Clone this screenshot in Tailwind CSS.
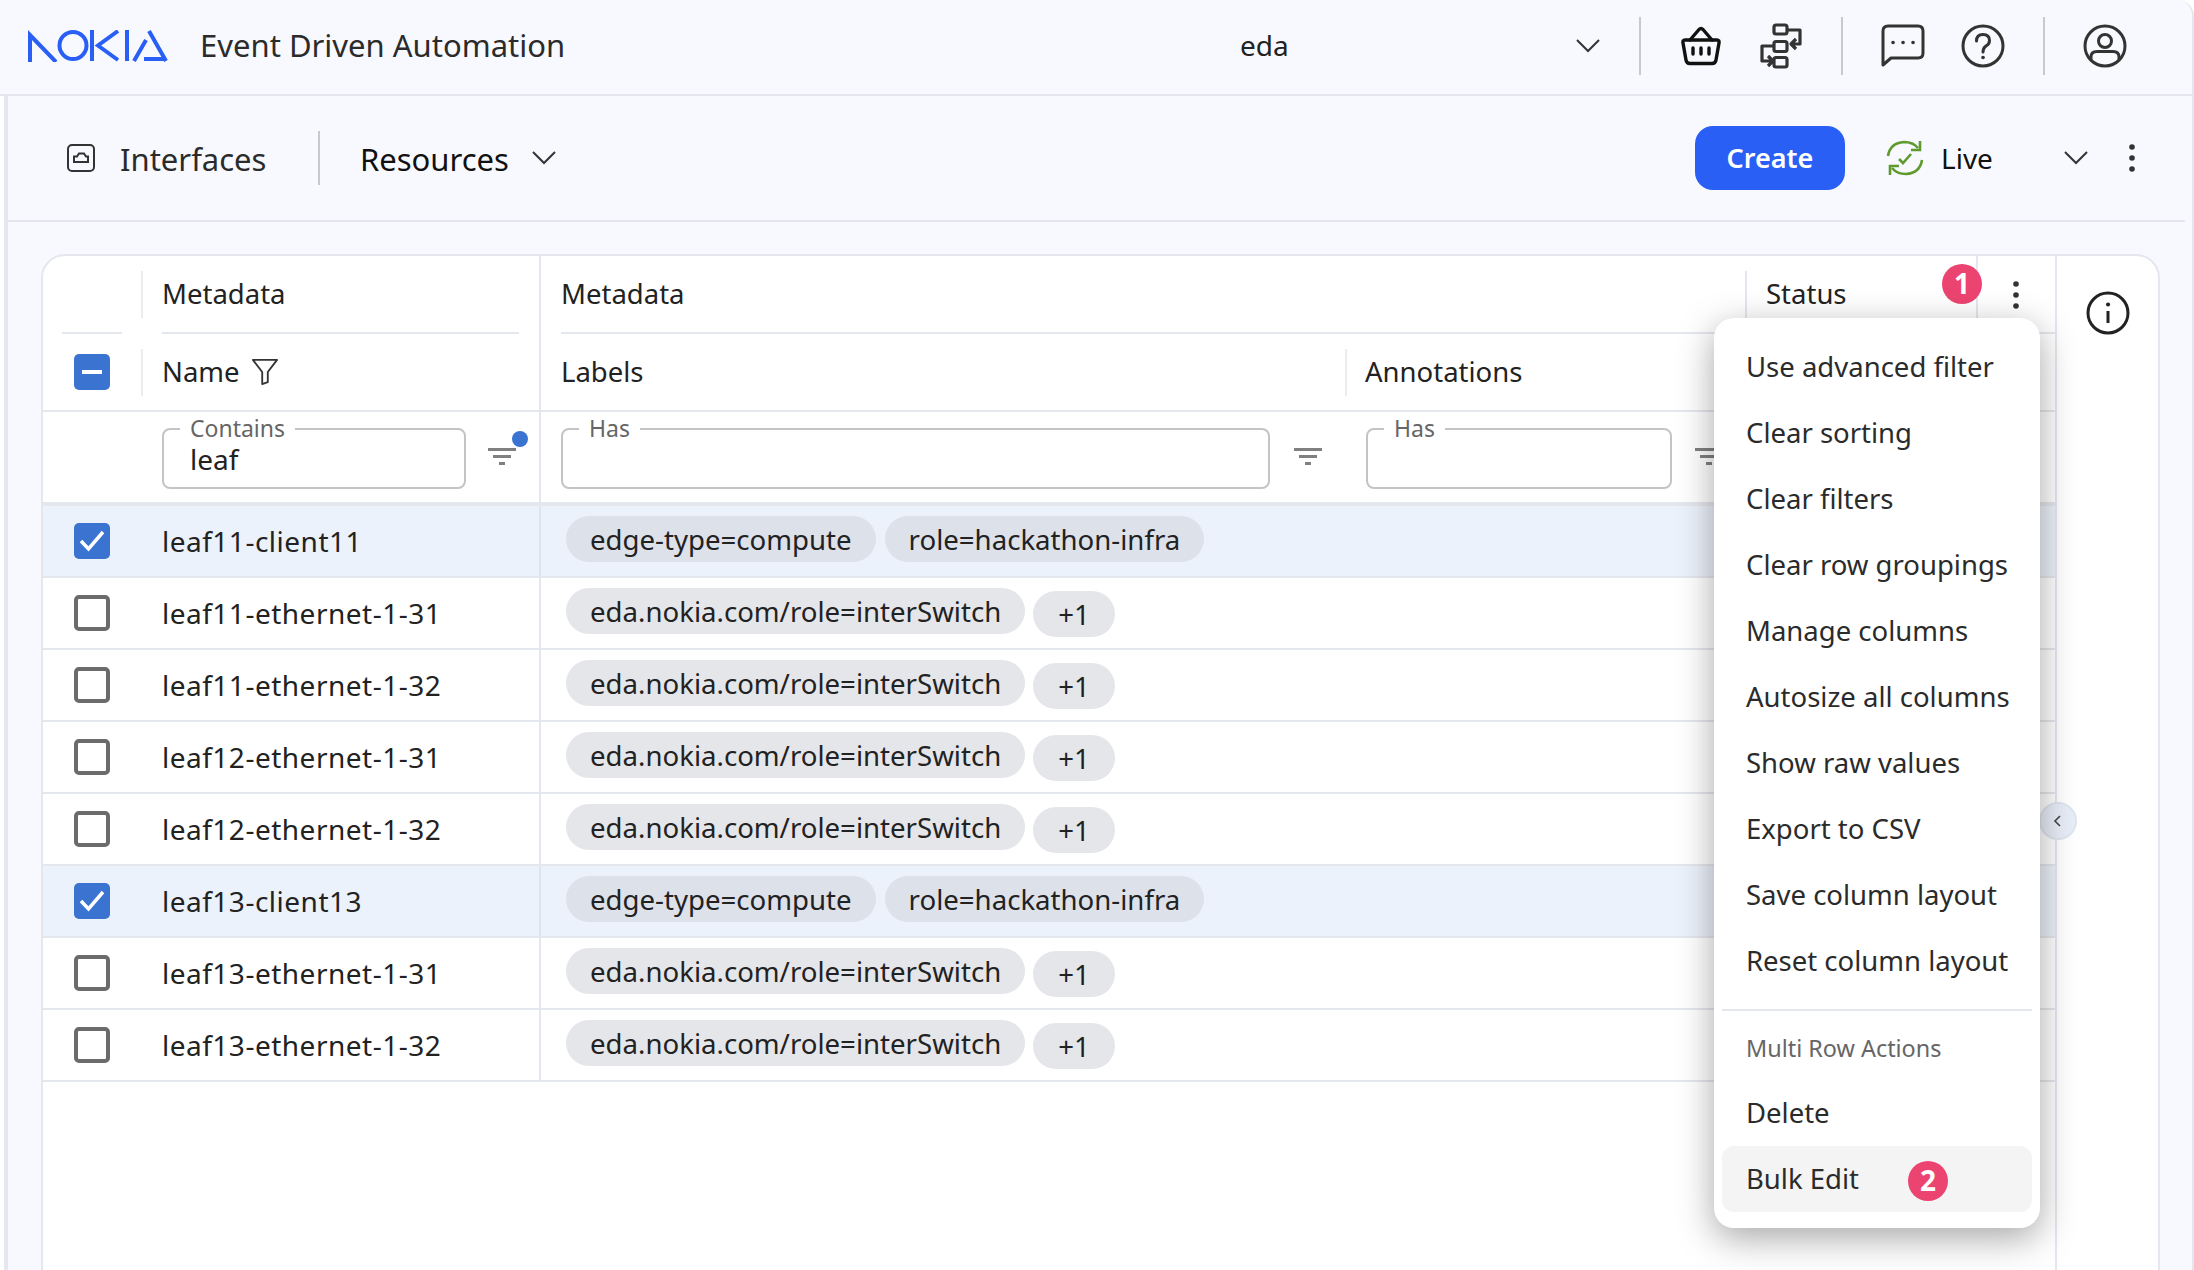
<!DOCTYPE html>
<html lang="en">
<head>
<meta charset="UTF-8" />
<title>Event Driven Automation</title>
<script src="https://cdn.jsdelivr.net/npm/@tailwindcss/browser@4"></script>
</head>
<body class="relative w-[2194px] h-[1270px] overflow-hidden bg-white text-[#222] font-['Noto_Sans',sans-serif] text-[27.5px]">

<!-- Top bar -->
<header class="flex items-center h-[96px] pb-[2px] bg-[#f8f9fe] border-b-2 border-r-2 border-[#e5e7ee] rounded-tr-[16px]">
  <svg class="ml-[28px]" width="140" height="32" viewBox="0 0 140 32" fill="none" stroke="#2a5ff5" stroke-width="4">
    <path d="M2 32V5L28 32" />
    <circle cx="45" cy="15.5" r="13.5" />
    <path d="M64 0V31M90 1L70 15.5L90 30M99 0V31" />
    <path d="M121 1L138 31M106 31L118 10M116 29H138" />
  </svg>
  <span class="ml-[32px] w-[700px] text-[31px] text-[#2b2b2b] pb-[2px]">Event Driven Automation</span>
  <span class="ml-[340px] w-[336px] text-[28px] pb-[2px]">eda</span>
  <svg width="24" height="14" viewBox="0 0 24 14" fill="none" stroke="#333" stroke-width="2"><path d="M1 1L12 12L23 1" /></svg>
  <div class="ml-[39px] w-[2px] h-[58px] bg-[#c8c9cc]"></div>
  <svg class="ml-[40px]" width="40" height="40" viewBox="0 0 40 40" fill="none" stroke="#111" stroke-width="3.4" stroke-linecap="round" stroke-linejoin="round">
    <path d="M9 14L18 3.5Q20 1.5 22 3.5L31 14" />
    <path d="M4 14H36Q38.500 14 38 17L35 34Q34.500 37.500 31 37.500H9Q5.500 37.500 5 34L2 17Q1.500 14 4 14Z" />
    <path d="M12 22V28M20 22V28M28 22V28" />
  </svg>
  <svg class="ml-[39px]" width="44" height="46" viewBox="0 0 44 46" fill="none" stroke="#333" stroke-width="3.2" stroke-linejoin="round">
    <rect x="14" y="2" width="13" height="9" rx="2" />
    <rect x="14" y="18.500" width="13" height="10" rx="2" />
    <rect x="14" y="34.500" width="13" height="9.500" rx="2" />
    <path d="M27 7H40V21H31M36 16L31 21L36 26" />
    <path d="M14 23H2V38H13M8 33L13 38L8 43" />
  </svg>
  <div class="ml-[37px] w-[2px] h-[58px] bg-[#c8c9cc]"></div>
  <svg class="ml-[38px]" width="44" height="44" viewBox="0 0 44 44" fill="none" stroke="#333" stroke-width="3">
    <path d="M2 41V7Q2 2 7 2H37Q42 2 42 7V29Q42 34 37 34H10Z" stroke-linejoin="round" />
    <path d="M12 18.500h.1M22 18.500h.1M32 18.500h.1" stroke-width="3.600" stroke-linecap="round" />
  </svg>
  <svg class="ml-[36px]" width="44" height="44" viewBox="0 0 44 44" fill="none" stroke="#333" stroke-width="3">
    <circle cx="22" cy="22" r="20" />
    <path d="M15.500 17Q15.500 10.500 22 10.500Q28.500 10.500 28.500 16.500Q28.500 20 25 22Q22 24 22 28" stroke-linecap="round" />
    <path d="M22 33.500h.1" stroke-width="3.600" stroke-linecap="round" />
  </svg>
  <div class="ml-[38px] w-[2px] h-[58px] bg-[#c8c9cc]"></div>
  <svg class="ml-[38px]" width="44" height="44" viewBox="0 0 44 44" fill="none" stroke="#333" stroke-width="3">
    <circle cx="22" cy="22" r="20" />
    <circle cx="22" cy="17" r="6.500" />
    <path d="M8 36V33Q8 27.500 14 27.500H30Q36 27.500 36 33V36" />
  </svg>
</header>

<!-- Page body -->
<main class="ml-[4px] border-l-4 border-r-2 border-[#e5e7ee] h-[1174px] bg-[#f8f9fe]">
  <!-- Toolbar -->
  <div class="flex items-center h-[126px] mr-[7px] border-b-2 border-[#e5e7ee]">
    <svg class="ml-[59px]" width="28" height="28" viewBox="0 0 28 28" fill="none" stroke="#333" stroke-width="2">
      <rect x="1" y="1" width="26" height="26" rx="4" />
      <path d="M7 18V12.500H10L12 9.500H17L19 12.500H21V18Z" />
    </svg>
    <span class="ml-[25px] w-[198px] text-[#2b2b2b] text-[31px] pt-[3px]">Interfaces</span>
    <div class="w-[2px] h-[54px] bg-[#c8c9cc]"></div>
    <span class="ml-[40px] w-[149px] text-[#111] text-[31px] pt-[3px]">Resources</span>
    <svg class="ml-[23px]" width="24" height="14" viewBox="0 0 24 14" fill="none" stroke="#333" stroke-width="2"><path d="M1 1L12 12L23 1" /></svg>
    <button class="ml-[1139px] w-[150px] h-[64px] rounded-[18px] bg-[#2a5ff5] text-white font-semibold text-[27px]">Create</button>
    <svg class="ml-[41px]" width="38" height="38" viewBox="0 0 38 38" fill="none" stroke="#5f9a2f" stroke-width="2.600">
      <path d="M2 17Q4 4 18 3Q27 3 32 9" />
      <path d="M34 2V11H25" />
      <path d="M36 21Q34 34 20 35Q11 35 6 29" />
      <path d="M4 36V27H13" />
      <path d="M13 20L17 24L25 15" />
    </svg>
    <span class="ml-[17px] w-[123px] text-[#111] text-[28px]">Live</span>
    <svg width="24" height="14" viewBox="0 0 24 14" fill="none" stroke="#333" stroke-width="2"><path d="M1 1L12 12L23 1" /></svg>
    <svg class="ml-[40px]" width="8" height="28" viewBox="0 0 8 28" fill="#333"><circle cx="4" cy="3" r="2.800" /><circle cx="4" cy="14" r="2.800" /><circle cx="4" cy="25" r="2.800" /></svg>
  </div>

  <!-- Card -->
  <section class="ml-[33px] mt-[32px] w-[2119px] h-[1060px] flex bg-white border-2 border-[#e5e7ee] rounded-[24px] overflow-hidden">
    <div class="w-[2014px] border-r-2 border-[#e5e7ee] flex flex-col">

      <!-- Column headers -->
      <div class="flex h-[78px]">
        <div class="w-[98px] flex-none pl-[19px] flex flex-col justify-end">
          <div class="w-[60px] h-[2px] bg-[#e5e7ee]"></div>
        </div>
        <div class="w-[400px] flex-none flex border-r-2 border-[#e5e7ee]">
          <div class="w-[2px] h-[47px] mt-[15px] bg-[#ececf0]"></div>
          <div class="ml-[19px] mr-[20px] flex-1 border-b-2 border-[#e5e7ee] pt-[17px]">Metadata</div>
        </div>
        <div class="ml-[20px] w-[1164px] flex-none border-b-2 border-[#e5e7ee] pt-[17px]">Metadata</div>
        <div class="ml-[20px] w-[231px] flex-none flex">
          <div class="w-[2px] h-[47px] mt-[15px] bg-[#e5e7ee]"></div>
          <div class="ml-[19px] flex-1 pt-[17px] border-b-2 border-[#e5e7ee]">Status</div>
        </div>
        <div class="flex-1 border-l-2 border-[#e5e7ee] flex flex-col justify-end">
          <div class="h-[2px] bg-[#e5e7ee]"></div>
        </div>
      </div>
      <div class="flex h-[78px] border-b-2 border-[#e5e7ee]">
        <div class="w-[98px] flex-none flex items-center pl-[31px]">
          <div class="w-[36px] h-[36px] rounded-[5px] bg-[#3a73d0] flex items-center justify-center"><div class="w-[20px] h-[4px] bg-white"></div></div>
        </div>
        <div class="w-[400px] flex-none flex items-center border-r-2 border-[#e5e7ee]">
          <div class="w-[2px] h-[47px] bg-[#ececf0]"></div>
          <span class="ml-[19px] w-[72px]">Name</span>
          <svg class="ml-[18px]" width="26" height="28" viewBox="0 0 28 30" fill="none" stroke="#333" stroke-width="2"><path d="M1 2H27L17 15V26L11 28V15Z" stroke-linejoin="round" /></svg>
        </div>
        <span class="ml-[20px] w-[784px] self-center">Labels</span>
        <div class="w-[2px] h-[47px] self-center bg-[#ececf0]"></div>
        <span class="ml-[18px] self-center">Annotations</span>
      </div>

      <!-- Filters -->
      <div class="flex h-[94px] border-b-4 border-[#e5e7ee]">
        <div class="w-[119px] flex-none"></div>
        <div class="w-[379px] flex-none border-r-2 border-[#e5e7ee] flex items-start pt-[16px]">
          <div class="relative w-[304px] h-[61px] border-2 border-[#c4c4c4] rounded-[8px]">
            <span class="absolute left-[16px] top-[-18px] px-[10px] bg-white text-[23px] leading-[32px] text-[#666]">Contains</span>
            <span class="absolute left-[26px] top-[10px] leading-[38px] text-[28px]">leaf</span>
          </div>
          <div class="relative ml-[22px] mt-[20px] w-[28px] flex flex-col items-center gap-[4px]">
            <div class="w-[28px] h-[3px] bg-[#808080]"></div><div class="w-[18px] h-[3px] bg-[#808080]"></div><div class="w-[6px] h-[3px] bg-[#808080]"></div>
            <div class="absolute left-[24px] top-[-17px] w-[16px] h-[16px] rounded-full bg-[#3a73d0]"></div>
          </div>
        </div>
        <div class="ml-[20px] w-[709px] flex-none pt-[16px]">
          <div class="relative h-[61px] border-2 border-[#c4c4c4] rounded-[8px]">
            <span class="absolute left-[16px] top-[-18px] px-[10px] bg-white text-[23px] leading-[32px] text-[#666]">Has</span>
          </div>
        </div>
        <div class="ml-[24px] mt-[36px] w-[28px] flex-none flex flex-col items-center gap-[4px]">
          <div class="w-[28px] h-[3px] bg-[#808080]"></div><div class="w-[18px] h-[3px] bg-[#808080]"></div><div class="w-[6px] h-[3px] bg-[#808080]"></div>
        </div>
        <div class="ml-[44px] w-[306px] flex-none pt-[16px]">
          <div class="relative h-[61px] border-2 border-[#c4c4c4] rounded-[8px]">
            <span class="absolute left-[16px] top-[-18px] px-[10px] bg-white text-[23px] leading-[32px] text-[#666]">Has</span>
          </div>
        </div>
        <div class="ml-[23px] mt-[36px] w-[28px] flex-none flex flex-col items-center gap-[4px]">
          <div class="w-[28px] h-[3px] bg-[#808080]"></div><div class="w-[18px] h-[3px] bg-[#808080]"></div><div class="w-[6px] h-[3px] bg-[#808080]"></div>
        </div>
      </div>

      <!-- Rows -->
      <div class="flex h-[72px] border-b-2 border-[#e5e7ee] bg-[#ecf2fb]">
        <div class="w-[498px] flex-none flex items-center pl-[31px] border-r-2 border-[#dfe5f0]">
          <div class="w-[36px] h-[36px] rounded-[5px] bg-[#3a73d0] flex items-center justify-center"><svg width="28" height="24" viewBox="0 0 28 24" fill="none" stroke="#fff" stroke-width="3.500"><path d="M3 12L10.500 20L25 3" /></svg></div>
          <span class="ml-[52px] text-[28px] tracking-[0.5px]">leaf11-client11</span>
        </div>
        <div class="flex items-start gap-[9px] pl-[25px] pt-[10px]">
          <span class="h-[46px] px-[24px] rounded-full bg-[#dde1e9] leading-[46px] text-[27.6px]">edge-type=compute</span>
          <span class="h-[46px] px-[24px] rounded-full bg-[#dde1e9] leading-[46px] text-[27.6px]">role=hackathon-infra</span>
        </div>
      </div>
      <div class="flex h-[72px] border-b-2 border-[#e5e7ee]">
        <div class="w-[498px] flex-none flex items-center pl-[31px] border-r-2 border-[#e5e7ee]">
          <div class="w-[36px] h-[36px] rounded-[5px] border-4 border-[#6b6b6b]"></div>
          <span class="ml-[52px] text-[28px] tracking-[0.5px]">leaf11-ethernet-1-31</span>
        </div>
        <div class="flex items-start gap-[8px] pl-[25px] pt-[10px]">
          <span class="h-[46px] px-[24px] rounded-full bg-[#e5e6ea] leading-[46px] text-[27.6px]">eda.nokia.com/role=interSwitch</span>
          <span class="h-[46px] mt-[3px] px-[25px] rounded-full bg-[#e5e6ea] leading-[47px] text-[27.6px]">+1</span>
        </div>
      </div>
      <div class="flex h-[72px] border-b-2 border-[#e5e7ee]">
        <div class="w-[498px] flex-none flex items-center pl-[31px] border-r-2 border-[#e5e7ee]">
          <div class="w-[36px] h-[36px] rounded-[5px] border-4 border-[#6b6b6b]"></div>
          <span class="ml-[52px] text-[28px] tracking-[0.5px]">leaf11-ethernet-1-32</span>
        </div>
        <div class="flex items-start gap-[8px] pl-[25px] pt-[10px]">
          <span class="h-[46px] px-[24px] rounded-full bg-[#e5e6ea] leading-[46px] text-[27.6px]">eda.nokia.com/role=interSwitch</span>
          <span class="h-[46px] mt-[3px] px-[25px] rounded-full bg-[#e5e6ea] leading-[47px] text-[27.6px]">+1</span>
        </div>
      </div>
      <div class="flex h-[72px] border-b-2 border-[#e5e7ee]">
        <div class="w-[498px] flex-none flex items-center pl-[31px] border-r-2 border-[#e5e7ee]">
          <div class="w-[36px] h-[36px] rounded-[5px] border-4 border-[#6b6b6b]"></div>
          <span class="ml-[52px] text-[28px] tracking-[0.5px]">leaf12-ethernet-1-31</span>
        </div>
        <div class="flex items-start gap-[8px] pl-[25px] pt-[10px]">
          <span class="h-[46px] px-[24px] rounded-full bg-[#e5e6ea] leading-[46px] text-[27.6px]">eda.nokia.com/role=interSwitch</span>
          <span class="h-[46px] mt-[3px] px-[25px] rounded-full bg-[#e5e6ea] leading-[47px] text-[27.6px]">+1</span>
        </div>
      </div>
      <div class="flex h-[72px] border-b-2 border-[#e5e7ee]">
        <div class="w-[498px] flex-none flex items-center pl-[31px] border-r-2 border-[#e5e7ee]">
          <div class="w-[36px] h-[36px] rounded-[5px] border-4 border-[#6b6b6b]"></div>
          <span class="ml-[52px] text-[28px] tracking-[0.5px]">leaf12-ethernet-1-32</span>
        </div>
        <div class="flex items-start gap-[8px] pl-[25px] pt-[10px]">
          <span class="h-[46px] px-[24px] rounded-full bg-[#e5e6ea] leading-[46px] text-[27.6px]">eda.nokia.com/role=interSwitch</span>
          <span class="h-[46px] mt-[3px] px-[25px] rounded-full bg-[#e5e6ea] leading-[47px] text-[27.6px]">+1</span>
        </div>
      </div>
      <div class="flex h-[72px] border-b-2 border-[#e5e7ee] bg-[#ecf2fb]">
        <div class="w-[498px] flex-none flex items-center pl-[31px] border-r-2 border-[#dfe5f0]">
          <div class="w-[36px] h-[36px] rounded-[5px] bg-[#3a73d0] flex items-center justify-center"><svg width="28" height="24" viewBox="0 0 28 24" fill="none" stroke="#fff" stroke-width="3.500"><path d="M3 12L10.500 20L25 3" /></svg></div>
          <span class="ml-[52px] text-[28px] tracking-[0.5px]">leaf13-client13</span>
        </div>
        <div class="flex items-start gap-[9px] pl-[25px] pt-[10px]">
          <span class="h-[46px] px-[24px] rounded-full bg-[#dde1e9] leading-[46px] text-[27.6px]">edge-type=compute</span>
          <span class="h-[46px] px-[24px] rounded-full bg-[#dde1e9] leading-[46px] text-[27.6px]">role=hackathon-infra</span>
        </div>
      </div>
      <div class="flex h-[72px] border-b-2 border-[#e5e7ee]">
        <div class="w-[498px] flex-none flex items-center pl-[31px] border-r-2 border-[#e5e7ee]">
          <div class="w-[36px] h-[36px] rounded-[5px] border-4 border-[#6b6b6b]"></div>
          <span class="ml-[52px] text-[28px] tracking-[0.5px]">leaf13-ethernet-1-31</span>
        </div>
        <div class="flex items-start gap-[8px] pl-[25px] pt-[10px]">
          <span class="h-[46px] px-[24px] rounded-full bg-[#e5e6ea] leading-[46px] text-[27.6px]">eda.nokia.com/role=interSwitch</span>
          <span class="h-[46px] mt-[3px] px-[25px] rounded-full bg-[#e5e6ea] leading-[47px] text-[27.6px]">+1</span>
        </div>
      </div>
      <div class="flex h-[72px] border-b-2 border-[#e5e7ee]">
        <div class="w-[498px] flex-none flex items-center pl-[31px] border-r-2 border-[#e5e7ee]">
          <div class="w-[36px] h-[36px] rounded-[5px] border-4 border-[#6b6b6b]"></div>
          <span class="ml-[52px] text-[28px] tracking-[0.5px]">leaf13-ethernet-1-32</span>
        </div>
        <div class="flex items-start gap-[8px] pl-[25px] pt-[10px]">
          <span class="h-[46px] px-[24px] rounded-full bg-[#e5e6ea] leading-[46px] text-[27.6px]">eda.nokia.com/role=interSwitch</span>
          <span class="h-[46px] mt-[3px] px-[25px] rounded-full bg-[#e5e6ea] leading-[47px] text-[27.6px]">+1</span>
        </div>
      </div>
    </div>

    <!-- Info panel -->
    <div class="flex-1 flex justify-center pt-[35px]">
      <svg width="44" height="44" viewBox="0 0 44 44" fill="none" stroke="#222" stroke-width="3">
        <circle cx="22" cy="22" r="20" />
        <path d="M22 13.500h.1" stroke-width="4" stroke-linecap="round" />
        <path d="M22 20V32" />
      </svg>
    </div>
  </section>
</main>

<!-- Column menu kebab and step badges -->
<svg class="absolute left-[2012px] top-[281px]" width="8" height="28" viewBox="0 0 8 28" fill="#333"><circle cx="4" cy="3" r="2.800" /><circle cx="4" cy="14" r="2.800" /><circle cx="4" cy="25" r="2.800" /></svg>
<div class="absolute left-[1942px] top-[264px] w-[40px] h-[40px] rounded-full bg-[#ec4470] text-white font-bold text-[28px] leading-[38px] text-center font-['Open_Sans',sans-serif]">1</div>

<!-- Collapse handle -->
<div class="absolute left-[2039px] top-[802px] w-[38px] h-[38px] rounded-full bg-[#e8eef8] border-2 border-[#dfe5f0] flex items-center justify-center">
  <svg width="10" height="14" viewBox="0 0 10 14" fill="none" stroke="#444" stroke-width="1.600"><path d="M7 2L2 7L7 12" /></svg>
</div>

<!-- Column menu -->
<div class="absolute left-[1714px] top-[318px] w-[326px] pt-[16px] pb-[16px] px-[8px] bg-white rounded-[20px] shadow-[0_10px_36px_rgba(0,0,0,0.35)] text-[#2b2b2b] whitespace-nowrap">
  <div class="h-[66px] flex items-center px-[24px]">Use advanced filter</div>
  <div class="h-[66px] flex items-center px-[24px]">Clear sorting</div>
  <div class="h-[66px] flex items-center px-[24px]">Clear filters</div>
  <div class="h-[66px] flex items-center px-[24px]">Clear row groupings</div>
  <div class="h-[66px] flex items-center px-[24px]">Manage columns</div>
  <div class="h-[66px] flex items-center px-[24px]">Autosize all columns</div>
  <div class="h-[66px] flex items-center px-[24px]">Show raw values</div>
  <div class="h-[66px] flex items-center px-[24px]">Export to CSV</div>
  <div class="h-[66px] flex items-center px-[24px]">Save column layout</div>
  <div class="h-[66px] flex items-center px-[24px]">Reset column layout</div>
  <div class="mt-[15px] h-[2px] bg-[#e5e7ee]"></div>
  <div class="h-[69px] flex items-center px-[24px] pt-[6px] text-[23.4px] text-[#666]">Multi Row Actions</div>
  <div class="h-[66px] flex items-center px-[24px]">Delete</div>
  <div class="relative h-[66px] flex items-center px-[24px] bg-[#f4f4f4] rounded-[12px]">
    Bulk Edit
    <div class="absolute left-[186px] top-[15px] w-[40px] h-[40px] rounded-full bg-[#ec4470] text-white font-bold text-[28px] leading-[38px] text-center font-['Open_Sans',sans-serif]">2</div>
  </div>
</div>
</body>
</html>
